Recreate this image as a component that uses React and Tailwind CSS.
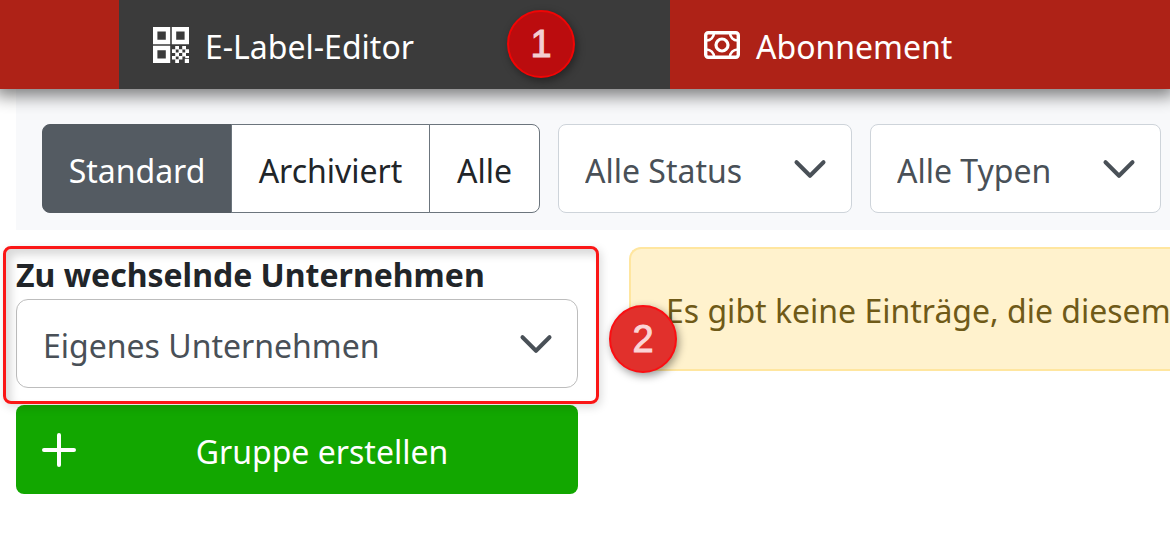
import { useState } from "react";

function QrIcon() {
  return (
    <svg viewBox="0 0 36 36" className="size-9 shrink-0" fill="none" aria-hidden="true">
      <g stroke="currentColor" strokeWidth="4.4">
        <path d="M2.2 2.2h12.8v12.8H2.2z" />
        <path d="M21 2.2h12.8v12.8H21z" />
        <path d="M2.2 21h12.8v12.8H2.2z" />
      </g>
      <g fill="currentColor">
        <path d="M22.2 19h3.8v3.6h-3.8zM29.2 19h3.8v3.6h-3.8z" />
        <path d="M19 22.2h3.8v3.8H19zM25.6 22.2h3.8v3.8h-3.8zM32.2 22.2H36v3.8h-3.8z" />
        <path d="M22.2 25.6h3.8v3.8h-3.8zM29.2 25.6h3.8v3.8h-3.8z" />
        <path d="M19 29h3.8v3.6H19zM25.6 29h3.8v3.6h-3.8zM32.2 29H36v2h-3.8z" />
        <path d="M22.2 32.2h3.8V36h-3.8zM31.8 31.8H36V36h-4.2z" />
      </g>
    </svg>
  );
}

function CashIcon() {
  return (
    <svg viewBox="0 0 36 28" className="h-7 w-9 shrink-0" fill="none" stroke="currentColor" aria-hidden="true">
      <rect x="1.7" y="1.7" width="32.6" height="24.6" rx="2.5" strokeWidth="3.4" />
      <circle cx="18" cy="14" r="6" strokeWidth="3.2" />
      <path
        d="M10 2a7.5 7.5 0 0 1-7.5 7.5M26 2a7.5 7.5 0 0 0 7.5 7.5M10 26a7.5 7.5 0 0 0-7.5-7.5M26 26a7.5 7.5 0 0 1 7.5-7.5"
        strokeWidth="2.6"
      />
    </svg>
  );
}

function PlusIcon() {
  return (
    <svg viewBox="0 0 34 34" className="size-[34px] shrink-0" fill="none" stroke="currentColor" strokeWidth="4" strokeLinecap="round" aria-hidden="true">
      <path d="M17 2v30M2 17h30" />
    </svg>
  );
}

function Select({ options, className, ...props }) {
  return (
    <div className="relative">
      <select
        className={`block h-[89px] appearance-none border bg-white pt-1 pr-16 pl-[26px] text-[#495057] ${className}`}
        {...props}
      >
        {options.map((option) => (
          <option key={option}>{option}</option>
        ))}
      </select>
      <svg
        viewBox="0 0 16 16"
        className="pointer-events-none absolute inset-y-0 right-6 my-auto size-9 text-[#495057]"
        fill="none"
        stroke="currentColor"
        strokeWidth="1.8"
        strokeLinecap="round"
        strokeLinejoin="round"
        aria-hidden="true"
      >
        <path d="m2 5 6 6 6-6" />
      </svg>
    </div>
  );
}

function StepBadge({ number, className }) {
  return (
    <span
      className={`absolute flex size-[68px] items-center justify-center rounded-full border-2 font-['Liberation_Sans',sans-serif] text-[38px] shadow-[2px_3px_8px_rgba(0,0,0,0.4)] [-webkit-text-stroke:1px_currentColor] ${className}`}
    >
      {number}
    </span>
  );
}

const filters = [
  { name: "Standard", width: "w-[190px]" },
  { name: "Archiviert", width: "w-[199px]" },
  { name: "Alle", width: "w-[111px]" },
];

export default function App() {
  const [filter, setFilter] = useState("Standard");

  return (
    <div className="overflow-hidden bg-white font-['Noto_Sans','Open_Sans',sans-serif] text-[32px] leading-10 text-[#212529]">
      {/* Navigation */}
      <nav className="relative z-10 flex h-[89px] bg-[#ae2217] pl-[119px] text-white shadow-[0_2px_16px_5px_rgba(0,0,0,0.5)]">
        <a href="#editor" className="relative flex w-[551px] shrink-0 items-center gap-4 bg-[#3b3b3b] pl-[34px]">
          <QrIcon />
          <span className="pt-1">E-Label-Editor</span>
          <StepBadge number={1} className="top-[10px] right-[95px] border-[#f00505] bg-[#bb0c0e] text-[#f3cfd1]" />
        </a>
        <a href="#abo" className="flex items-center gap-4 pl-[34px]">
          <CashIcon />
          <span className="pt-1">Abonnement</span>
        </a>
      </nav>

      {/* Filter */}
      <div className="ml-4 flex gap-[18px] bg-[#f8f9fb] pt-[35px] pb-[17px] pl-[26px]">
        <div className="flex shrink-0" role="group" aria-label="Filter">
          {filters.map(({ name, width }) => (
            <button
              key={name}
              type="button"
              aria-pressed={filter === name}
              onClick={() => setFilter(name)}
              className={`-ml-px h-[89px] border pt-1 first:ml-0 first:rounded-l-lg last:rounded-r-lg ${width} ${
                filter === name ? "border-[#545b62] bg-[#545b62] text-white" : "border-[#6c757d] bg-white"
              }`}
            >
              {name}
            </button>
          ))}
        </div>
        <Select aria-label="Status" options={["Alle Status"]} className="w-[294px] rounded-lg border-[#ced4da]" />
        <Select aria-label="Typen" options={["Alle Typen"]} className="w-[291px] rounded-lg border-[#ced4da]" />
      </div>

      <div className="flex items-start gap-[51px] pt-[17px] pl-4">
        {/* Gruppen */}
        <div className="w-[562px] shrink-0">
          <div className="relative mb-[17px] pt-2">
            <label htmlFor="company" className="mb-1 block font-bold">
              Zu wechselnde Unternehmen
            </label>
            <Select id="company" options={["Eigenes Unternehmen"]} className="w-full rounded-xl border-[#bdbdbd]" />
            <div className="pointer-events-none absolute -top-px -right-[21px] -bottom-4 -left-[13px] rounded-lg border-3 border-[#fa1616] shadow-[2px_3px_10px_rgba(0,0,0,0.15),inset_5px_6px_8px_rgba(0,0,0,0.15)]" />
            <StepBadge number={2} className="top-[58px] -right-[99px] z-10 border-[#fb0e12] bg-[#e1302c] text-[#fbd5d7]" />
          </div>
          <button type="button" className="flex h-[89px] w-full items-center rounded-lg bg-[#12a700] px-[26px] text-white">
            <PlusIcon />
            <span className="flex-1 pt-1 pl-4">Gruppe erstellen</span>
          </button>
        </div>

        {/* Hinweis */}
        <div role="alert" className="min-w-0 flex-1 overflow-hidden rounded-l-xl border-2 border-r-0 border-[#ffe69f] bg-[#fff2cd] pt-[42px] pb-[38px] pl-[35px] whitespace-nowrap text-[#6f5a18]">
          Es gibt keine Einträge, die diesem
        </div>
      </div>
    </div>
  );
}
